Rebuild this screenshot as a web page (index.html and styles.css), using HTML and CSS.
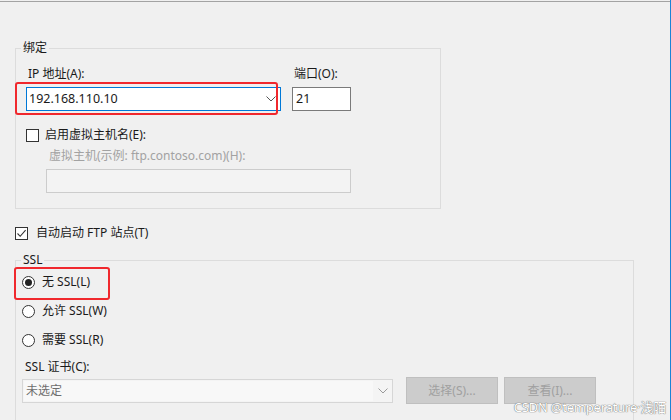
FILE: index.html
```html
<!DOCTYPE html>
<html lang="zh-CN">
<head>
<meta charset="utf-8">
<title>FTP 站点绑定</title>
<link rel="stylesheet" href="styles.css">
</head>
<body>
<div class="win">
  <div class="topline"></div>

  <fieldset class="group binding">
    <legend class="legend">绑定</legend>
    <div class="binding-body">
      <div class="addr-grid">
        <label class="lbl">IP 地址(A):</label>
        <label class="lbl">端口(O):</label>
        <div class="combo">
          <span class="combo-text">192.168.110.10</span>
          <svg class="chev" width="10" height="6" viewBox="0 0 10 6"><path d="M0.5 0.5 L5 5 L9.5 0.5" fill="none" stroke="#555" stroke-width="1"/></svg>
        </div>
        <div class="textbox port">21</div>
      </div>
      <div class="check-row host-check">
        <span class="checkbox"></span>
        <span class="check-text">启用虚拟主机名(E):</span>
      </div>
      <div class="host-block">
        <div class="lbl disabled">虚拟主机(示例: ftp.contoso.com)(H):</div>
        <div class="textbox disabled-box"></div>
      </div>
    </div>
  </fieldset>

  <div class="check-row auto-start">
    <span class="checkbox checked">
      <svg width="11" height="11" viewBox="0 0 11 11"><path d="M1.5 5.5 L4.2 8.3 L9.6 2.2" fill="none" stroke="#333" stroke-width="1.1"/></svg>
    </span>
    <span class="check-text">自动启动 FTP 站点(T)</span>
  </div>

  <fieldset class="group ssl">
    <legend class="legend">SSL</legend>
    <div class="ssl-body">
      <div class="radio-row first">
        <span class="radio on"></span>
        <span class="check-text">无 SSL(L)</span>
      </div>
      <div class="radio-row">
        <span class="radio"></span>
        <span class="check-text">允许 SSL(W)</span>
      </div>
      <div class="radio-row">
        <span class="radio"></span>
        <span class="check-text">需要 SSL(R)</span>
      </div>
      <div class="lbl cert-lbl">SSL 证书(C):</div>
      <div class="cert-row">
        <div class="dropdown">
          <span class="dropdown-text">未选定</span>
          <span class="dropdown-btn">
            <svg width="10" height="6" viewBox="0 0 10 6"><path d="M0.5 0.5 L5 5 L9.5 0.5" fill="none" stroke="#9a9a9a" stroke-width="1"/></svg>
          </span>
        </div>
        <button class="btn" disabled>选择(S)...</button>
        <button class="btn" disabled>查看(I)...</button>
      </div>
    </div>
  </fieldset>

  <div class="mark mark-ip"></div>
  <div class="mark mark-ssl"></div>
  <div class="watermark">CSDN @temperature·浅陌</div>
</div>
</body>
</html>
```

FILE: styles.css
```css
html, body {
  margin: 0;
  padding: 0;
  background: #f0f0f0;
}

body {
  font-family: "Noto Sans", "Noto Sans CJK SC", sans-serif;
  font-size: 12px;
  line-height: 16px;
  color: #1a1a1a;
}

.win {
  position: relative;
  width: 671px;
  height: 420px;
  box-sizing: border-box;
  border-right: 1px solid #1a84d6;
  padding-left: 15px;
  overflow: hidden;
}

.topline {
  margin: 1px 0 0 -15px;
  height: 1px;
  background: #a3a3a3;
}

.group {
  margin: 0;
  padding: 0;
  border: 1px solid #dcdcdc;
  min-width: 0;
  box-sizing: border-box;
}

.legend {
  padding: 0 2px;
  margin-left: 5px;
  line-height: 16px;
  height: 16px;
}

.binding {
  margin-top: 38px;
  width: 426px;
}

.binding-body {
  padding: 10px 0 15px 10px;
}

.addr-grid {
  display: grid;
  grid-template-columns: 255px 59px;
  column-gap: 11px;
  row-gap: 5px;
}

.lbl {
  padding-left: 2px;
  line-height: 16px;
}

.combo {
  height: 24px;
  box-sizing: border-box;
  border: 1px solid #0078d7;
  background: #fff;
  display: flex;
  align-items: center;
  justify-content: space-between;
  padding: 0 4px 0 2px;
  font-size: 12.5px;
}

.chev {
  display: block;
}

.textbox {
  height: 24px;
  box-sizing: border-box;
  border: 1px solid #7a7a7a;
  background: #fff;
  display: flex;
  align-items: center;
  padding-left: 3px;
  font-size: 12.5px;
}

.check-row {
  display: flex;
  align-items: center;
  gap: 6px;
  height: 16px;
}

.host-check {
  margin-top: 16px;
}

.checkbox {
  width: 13px;
  height: 13px;
  box-sizing: border-box;
  border: 1px solid #333;
  background: #fff;
  display: flex;
  align-items: center;
  justify-content: center;
  flex: none;
}

.checkbox svg {
  display: block;
}

.host-block {
  margin-left: 20px;
  margin-top: 5px;
  display: flex;
  flex-direction: column;
  gap: 5px;
  width: 305px;
}

.host-block .lbl {
  padding-left: 3px;
}

.disabled {
  color: #a2a2a2;
}

.disabled-box {
  border-color: #cccccc;
  background: #f3f3f3;
}

.auto-start {
  margin-top: 16px;
  gap: 8px;
}

.ssl {
  margin-top: 11px;
  width: 619px;
  height: 174px;
}

.ssl-body {
  padding: 0 0 0 6px;
}

.radio-row {
  display: flex;
  align-items: center;
  gap: 7px;
  height: 16px;
  margin-top: 13px;
}

.radio-row.first {
  margin-top: 6px;
}

.radio {
  width: 13px;
  height: 13px;
  box-sizing: border-box;
  border: 1px solid #333;
  border-radius: 50%;
  background: #fff;
  display: flex;
  align-items: center;
  justify-content: center;
  flex: none;
}

.radio.on::after {
  content: "";
  width: 7px;
  height: 7px;
  border-radius: 50%;
  background: #222;
}

.cert-lbl {
  margin-top: 11px;
  padding-left: 3px;
}

.cert-row {
  display: flex;
  align-items: center;
  margin-top: 2px;
  height: 27px;
}

.dropdown {
  width: 371px;
  height: 24px;
  box-sizing: border-box;
  border: 1px solid #d6d6d6;
  background: #f4f4f4;
  display: flex;
  align-items: stretch;
}

.dropdown-text {
  flex: 1;
  display: flex;
  align-items: center;
  padding-left: 2px;
  color: #6d6d6d;
  background: #f8f8f8;
  margin: 1px 0 1px 1px;
}

.dropdown-btn {
  width: 19px;
  display: flex;
  align-items: center;
  justify-content: center;
}

.btn {
  font-family: inherit;
  font-size: 12px;
  line-height: 16px;
  width: 92px;
  height: 27px;
  box-sizing: border-box;
  border: 1px solid #bfbfbf;
  background: #cccccc;
  color: #a0a0a0;
  padding: 0;
  margin-left: 13px;
}

.btn + .btn {
  margin-left: 6px;
}

.mark {
  position: absolute;
  box-sizing: border-box;
  border: 2px solid #f0282d;
  border-radius: 3px;
}

.mark-ip {
  left: 15px;
  top: 82px;
  width: 263px;
  height: 33px;
}

.mark-ssl {
  left: 14px;
  top: 267px;
  width: 96px;
  height: 33px;
}

.watermark {
  position: absolute;
  right: 4px;
  bottom: 6px;
  font-size: 13px;
  line-height: 14px;
  color: #fff;
  letter-spacing: -0.2px;
  text-shadow: 0 0 1px #6a6a6a, 0 0 1px #6a6a6a;
}
```
